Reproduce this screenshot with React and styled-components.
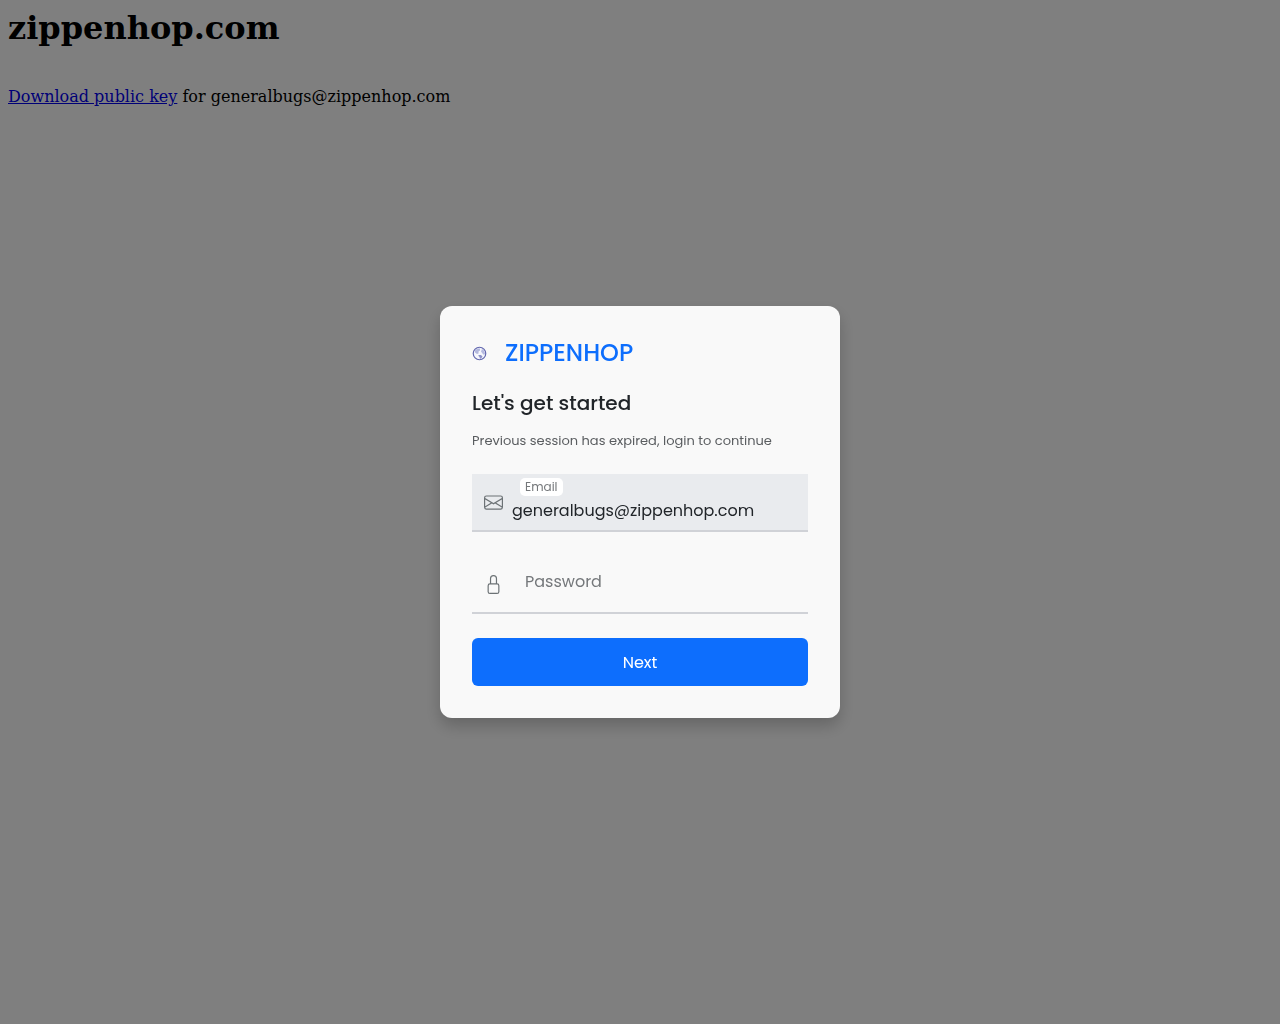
import { useState } from "react";
import styled, { createGlobalStyle } from "styled-components";
import { BsEnvelope, BsLock } from "react-icons/bs";

const GlobalStyle = createGlobalStyle`
  * {
    box-sizing: border-box;
  }
  body {
    margin: 0;
    background: #fff;
    color: #000;
    font-family: "DejaVu Serif", serif;
    font-size: 16px;
  }
`;

const Page = styled.main`
  padding: 8px;
`;
const PageTitle = styled.h1`
  margin: 0 0 40px;
  font-size: 32px;
  line-height: 40px;
`;
const PageText = styled.p`
  margin: 0;
  line-height: 18px;
`;
const KeyLink = styled.a`
  color: #0000ee;
`;

const Overlay = styled.div`
  position: fixed;
  inset: 0;
  display: flex;
  align-items: center;
  justify-content: center;
  background: rgba(0, 0, 0, 0.5);
`;
const Card = styled.section`
  width: 100%;
  max-width: 400px;
  padding: 32px;
  border-radius: 12px;
  background: #f9f9f9;
  color: #212529;
  box-shadow: 0 8px 16px rgba(0, 0, 0, 0.2);
  font-family: Poppins, Inter, sans-serif;
`;
const Brand = styled.div`
  display: flex;
  align-items: center;
  gap: 18px;
  margin-bottom: 22px;
`;
const BrandName = styled.span`
  color: #0d6efd;
  font-size: 24px;
  font-weight: 500;
  line-height: 30px;
`;
const Heading = styled.h2`
  margin: 0 0 14px;
  font-size: 20px;
  font-weight: 500;
  line-height: 26px;
`;
const Message = styled.p`
  margin: 0 0 22px;
  color: #5a5d60;
  font-size: 13px;
  line-height: 22px;
`;

const Form = styled.form`
  display: flex;
  flex-direction: column;
  gap: 24px;
`;
const Field = styled.div`
  position: relative;
  display: flex;
  align-items: center;
  height: 58px;
  padding-left: 12px;
  border-bottom: 2px solid #d0d2d7;
  background: ${(props) => (props.$filled ? "#e9ebee" : "transparent")};
  color: #6c7275;
`;
const Input = styled.input`
  flex: 1;
  min-width: 0;
  align-self: stretch;
  padding: 16px 9px 0;
  border: 0;
  outline: 0;
  background: transparent;
  color: #212529;
  font-family: inherit;
  font-size: 16px;
`;
const Label = styled.label`
  position: absolute;
  top: ${(props) => (props.$raised ? "4px" : "12px")};
  left: 48px;
  padding: 0 5px;
  border-radius: 5px;
  background: ${(props) => (props.$raised ? "#fff" : "transparent")};
  color: #75787b;
  font-size: ${(props) => (props.$raised ? "12px" : "16px")};
  line-height: ${(props) => (props.$raised ? "18px" : "28px")};
`;
const Button = styled.button`
  height: 48px;
  border: 0;
  border-radius: 6px;
  background: #0d6efd;
  color: #fff;
  font-family: inherit;
  font-size: 16px;
  cursor: pointer;
`;

const Globe = () => (
  <svg width="15" height="15" viewBox="0 0 30 30" aria-hidden="true">
    <circle cx="15" cy="15" r="12.5" fill="#f5f6fc" stroke="#6267ae" strokeWidth="2.4" />
    <path
      d="M6 9l5-4 5 0 0 4-3 2 0 4-3 1-4-3z"
      fill="#b3b8dd"
    />
    <path d="M20 6l4 3 2 6-2 3-3-3-3-4z" fill="#b6bae0" />
    <path d="M13 18l5 0 3 3-2 3-3 2-1-4-2-2z" fill="#8e93c9" />
  </svg>
);

const App = () => {
  const [email, setEmail] = useState("generalbugs@zippenhop.com");
  const [password, setPassword] = useState("");

  return (
    <>
      <GlobalStyle />
      <Page>
        <PageTitle>zippenhop.com</PageTitle>
        <PageText>
          <KeyLink href="#key">Download public key</KeyLink> for generalbugs@zippenhop.com
        </PageText>
      </Page>
      <Overlay>
        <Card role="dialog" aria-labelledby="heading">
          <Brand>
            <Globe />
            <BrandName>ZIPPENHOP</BrandName>
          </Brand>
          <Heading id="heading">Let's get started</Heading>
          <Message>Previous session has expired, login to continue</Message>
          <Form onSubmit={(e) => e.preventDefault()}>
            <Field $filled>
              <BsEnvelope size={19} />
              <Input
                id="email"
                type="email"
                value={email}
                onChange={(e) => setEmail(e.target.value)}
              />
              <Label htmlFor="email" $raised={email !== ""}>Email</Label>
            </Field>
            <Field>
              <BsLock size={19} />
              <Input
                id="password"
                type="password"
                value={password}
                onChange={(e) => setPassword(e.target.value)}
              />
              <Label htmlFor="password" $raised={password !== ""}>Password</Label>
            </Field>
            <Button type="submit">Next</Button>
          </Form>
        </Card>
      </Overlay>
    </>
  );
};

export default App;
